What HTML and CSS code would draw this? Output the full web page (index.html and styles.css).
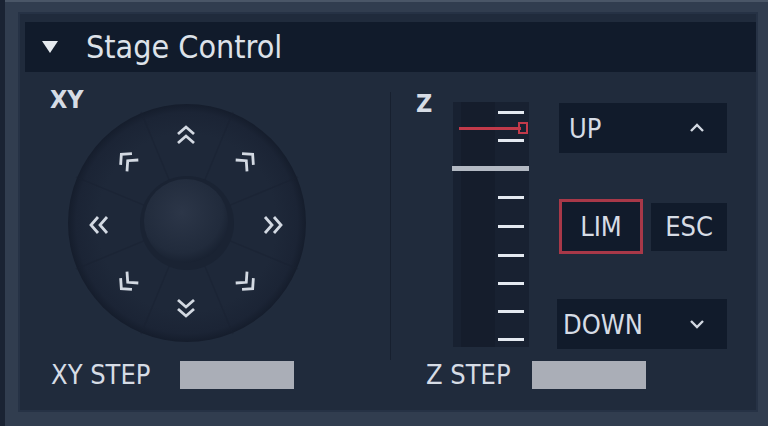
FILE: index.html
```html
<!DOCTYPE html>
<html lang="en">
<head>
    <meta charset="UTF-8">
    <title>Stage Control</title>
    <link rel="stylesheet" href="styles.css">
</head>
<body>
    <div class="frame">
        <div class="panel">
            <div class="panel-header">
                <span class="caret"></span>
                <span class="title">Stage Control</span>
            </div>

            <div class="panel-body">
                <div class="xy-area">
                    <div class="label">XY</div>
                    <svg class="joystick" width="240" height="240" viewBox="0 0 240 240">
                        <defs>
                            <radialGradient id="ring" cx="50%" cy="50%" r="50%">
                                <stop offset="0.75" stop-color="#1e2839"/>
                                <stop offset="0.93" stop-color="#1b2435"/>
                                <stop offset="1" stop-color="#151d2c"/>
                            </radialGradient>
                            <radialGradient id="knob" cx="45%" cy="40%" r="60%">
                                <stop offset="0" stop-color="#2c3648"/>
                                <stop offset="0.8" stop-color="#212b3c"/>
                                <stop offset="1" stop-color="#192232"/>
                            </radialGradient>
                            <g id="chev">
                                <path d="M-8 -1 L0 -8 L8 -1 M-8 8 L0 1 L8 8" fill="none" stroke="#d3d9e2" stroke-width="2.8"/>
                            </g>
                        </defs>
                        <circle cx="120" cy="120" r="119" fill="url(#ring)"/>
                        <g stroke="#1a2232" stroke-width="1.2" opacity="0.5">
                            <line x1="120" y1="120" x2="166" y2="9"/>
                            <line x1="120" y1="120" x2="231" y2="74"/>
                            <line x1="120" y1="120" x2="231" y2="166"/>
                            <line x1="120" y1="120" x2="166" y2="231"/>
                            <line x1="120" y1="120" x2="74" y2="231"/>
                            <line x1="120" y1="120" x2="9" y2="166"/>
                            <line x1="120" y1="120" x2="9" y2="74"/>
                            <line x1="120" y1="120" x2="74" y2="9"/>
                        </g>
                        <circle cx="120" cy="120" r="47" fill="#1a2333"/>
                        <circle cx="119" cy="118" r="42" fill="url(#knob)"/>
                        <use href="#chev" transform="translate(119 32)"/>
                        <use href="#chev" transform="translate(119 205) rotate(180)"/>
                        <use href="#chev" transform="translate(32 122) rotate(-90)"/>
                        <use href="#chev" transform="translate(206 122) rotate(90)"/>
                        <use href="#chev" transform="translate(60 57) rotate(-45)"/>
                        <use href="#chev" transform="translate(180 57) rotate(45)"/>
                        <use href="#chev" transform="translate(60 180) rotate(-135)"/>
                        <use href="#chev" transform="translate(180 180) rotate(135)"/>
                    </svg>
                </div>

                <div class="z-area">
                    <div class="label z-label">Z</div>
                    <svg class="z-scale" width="80" height="245" viewBox="0 0 80 245">
                        <rect x="2" y="0" width="76" height="245" fill="#182131"/>
                        <rect x="10" y="0" width="34" height="245" fill="#151d2c"/>
                        <g fill="#e4e9f0">
                            <rect x="47" y="9" width="26" height="3"/>
                            <rect x="47" y="37" width="26" height="3"/>
                            <rect x="47" y="94" width="26" height="3"/>
                            <rect x="47" y="123" width="26" height="3"/>
                            <rect x="47" y="152" width="26" height="3"/>
                            <rect x="47" y="180" width="26" height="3"/>
                            <rect x="47" y="208" width="26" height="3"/>
                            <rect x="47" y="236" width="26" height="3"/>
                        </g>
                        <rect x="1" y="64" width="77" height="5" fill="#b3b9c3"/>
                        <rect x="8" y="25" width="62" height="3" fill="#c23a4a"/>
                        <rect x="68" y="21" width="8" height="10" fill="none" stroke="#c23a4a" stroke-width="2"/>
                    </svg>
                    <div class="z-buttons">
                        <button class="btn btn-wide">
                            <span>UP</span>
                            <svg width="16" height="10" viewBox="0 0 16 10"><path d="M2 8 L8 2 L14 8" fill="none" stroke="#d3d9e2" stroke-width="2.4"/></svg>
                        </button>
                        <div class="btn-row">
                            <button class="btn btn-lim">LIM</button>
                            <button class="btn btn-esc">ESC</button>
                        </div>
                        <button class="btn btn-wide btn-down">
                            <span>DOWN</span>
                            <svg width="16" height="10" viewBox="0 0 16 10"><path d="M2 2 L8 8 L14 2" fill="none" stroke="#d3d9e2" stroke-width="2.4"/></svg>
                        </button>
                    </div>
                </div>

                <div class="step-row xy-step">
                    <span class="label">XY STEP</span>
                    <div class="step-input"></div>
                </div>
                <div class="step-row z-step">
                    <span class="label">Z STEP</span>
                    <div class="step-input"></div>
                </div>
            </div>
        </div>
    </div>
</body>
</html>
```

FILE: styles.css
```css
body {
    margin: 0;
    background: #1a2333;
    font-family: "DejaVu Sans Condensed", "Liberation Sans Narrow", Roboto, sans-serif;
    color: #d9dfe7;
    overflow: hidden;
}
.frame {
    margin-left: 5px;
    height: 426px;
    box-sizing: border-box;
    background: #313d4f;
    border-top: 2px solid #4a5667;
    padding: 10px 10px 0 13px;
}
.panel {
    height: 400px;
    background: #202b3c;
    box-shadow: inset 0 0 0 2px #263245;
    padding: 10px 2px 0 7px;
    box-sizing: border-box;
}
.panel-header {
    height: 50px;
    background: #111b2b;
    display: flex;
    align-items: center;
    padding-left: 17px;
}
.caret {
    width: 0;
    height: 0;
    border-left: 8px solid transparent;
    border-right: 8px solid transparent;
    border-top: 12px solid #e6eaef;
    margin-right: 28px;
}
.title {
    font-size: 32px;
    color: #dde2e9;
}
.panel-body {
    display: grid;
    grid-template-columns: 365px 1fr;
    grid-template-rows: 280px 1fr;
}
.label {
    font-size: 25px;
    line-height: 24px;
    font-weight: bold;
    color: #d6dce5;
}
.xy-area {
    padding: 16px 0 0 25px;
}
.joystick {
    display: block;
    margin: -9px 0 0 17px;
}
.z-area {
    margin-top: 20px;
    height: 268px;
    border-left: 1px solid #17202f;
    padding-left: 25px;
    display: flex;
}
.z-label {
    width: 35px;
}
.z-scale {
    display: block;
    margin-top: 10px;
}
.z-buttons {
    margin: 11px 0 0 28px;
    width: 168px;
    display: flex;
    flex-direction: column;
}
.btn {
    font-family: inherit;
    font-size: 27px;
    color: #d6dce5;
    background: #111b2b;
    border: none;
    padding: 0;
    cursor: pointer;
}
.btn-wide {
    height: 50px;
    display: flex;
    align-items: center;
    justify-content: space-between;
    padding: 0 22px 0 10px;
}
.btn-row {
    display: flex;
    align-items: center;
    gap: 8px;
    margin: 46px 0 45px;
}
.btn-lim {
    width: 84px;
    height: 55px;
    border: 3px solid #a83848;
}
.btn-esc {
    width: 76px;
    height: 48px;
}
.btn-down {
    margin-left: -2px;
    padding-left: 6px;
}
.step-row {
    display: flex;
    align-items: center;
    height: 46px;
}
.xy-step {
    padding-left: 26px;
}
.z-step {
    padding-left: 36px;
}
.step-row .label {
    font-size: 27px;
    font-weight: normal;
}
.xy-step .label {
    width: 129px;
}
.z-step .label {
    width: 106px;
}
.step-input {
    width: 114px;
    height: 28px;
    background: #aaaeb7;
}
```
